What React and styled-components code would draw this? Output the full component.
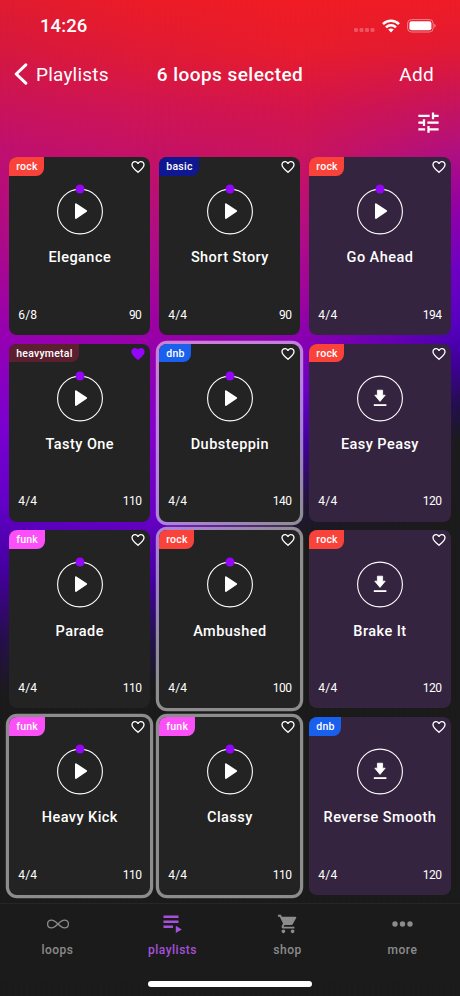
import React from 'react';
import styled, { createGlobalStyle } from 'styled-components';
import { MdFavorite, MdFavoriteBorder, MdShoppingCart, MdTune } from 'react-icons/md';

const GlobalStyle = createGlobalStyle`
  body {
    margin: 0;
    background: #1b1b1b;
  }
  * {
    box-sizing: border-box;
  }
`;

const Screen = styled.div`
  display: grid;
  width: 460px;
  height: 996px;
  overflow: hidden;
  color: #fff;
  font-family: Roboto, 'Liberation Sans', sans-serif;
`;

const Backdrop = styled.div`
  grid-area: 1 / 1;
  display: grid;
  background: #1b1b1b;
`;

const Glow = styled.div`
  grid-area: 1 / 1;
  background: linear-gradient(180deg, ${props => props.$stops});
  mask-image: ${props => props.$mask || 'none'};
`;

const Content = styled.div`
  grid-area: 1 / 1;
  z-index: 1;
  display: flex;
  flex-direction: column;
`;

const StatusBar = styled.div`
  display: flex;
  align-items: center;
  justify-content: space-between;
  height: 52px;
  padding: 0 24px 0 40px;
`;

const Time = styled.div`
  margin-top: -1px;
  font-size: 18.5px;
  font-weight: 500;
  letter-spacing: 0.1px;
`;

const StatusIcons = styled.div`
  display: flex;
  align-items: center;
  gap: 7px;
`;

const Header = styled.div`
  display: grid;
  grid-template-columns: 1fr auto 1fr;
  align-items: center;
  height: 44px;
  padding: 0 26px 0 14px;
`;

const Back = styled.div`
  display: flex;
  align-items: center;
  gap: 8px;
  font-size: 19px;
  letter-spacing: 0.2px;
`;

const Heading = styled.div`
  font-size: 19px;
  font-weight: 500;
  margin-left: 12px;
  letter-spacing: 0.45px;
`;

const Add = styled.div`
  justify-self: end;
  font-size: 19px;
  letter-spacing: 0.3px;
`;

const Toolbar = styled.div`
  display: flex;
  align-items: center;
  justify-content: flex-end;
  height: 53px;
  padding-right: 18px;
`;

const Grid = styled.div`
  display: grid;
  grid-template-columns: repeat(3, 141.2px);
  grid-auto-rows: 178px;
  gap: 8.7px 8.9px;
  height: 754px;
  padding: 8px 9px 0 9.2px;
`;

const Card = styled.div`
  display: flex;
  flex-direction: column;
  align-items: center;
  border-radius: 8px;
  background: ${props => (props.$shop ? '#35243f' : '#232323')};
  box-shadow: ${props => (props.$selected ? '0 0 0 3.2px rgba(255, 255, 255, 0.5)' : 'none')};
`;

const CardTop = styled.div`
  display: flex;
  justify-content: space-between;
  align-self: stretch;
  height: 31px;
  padding-right: 4px;
`;

const Tag = styled.div`
  height: 18.5px;
  padding: 0 6.5px 0 7px;
  border-radius: 8px 0 8px 0;
  background: ${props => props.$color};
  font-size: 10.5px;
  font-weight: 500;
  line-height: 19px;
  letter-spacing: 0.25px;
`;

const Favourite = styled.div`
  display: flex;
  margin-top: 2px;
  height: 16px;
  color: ${props => (props.$on ? '#9406f6' : '#fff')};
`;

const Name = styled.div`
  margin-top: 11.3px;
  font-size: 14.5px;
  font-weight: 500;
  line-height: 18px;
  letter-spacing: 0.45px;
  white-space: nowrap;
`;

const CardBottom = styled.div`
  display: flex;
  justify-content: space-between;
  align-self: stretch;
  margin-top: auto;
  padding: 0 9px 12.3px;
  font-size: 12px;
  line-height: 16px;
`;

const Beat = styled.span`
  letter-spacing: 0.2px;
`;

const Bpm = styled.span`
  letter-spacing: -0.5px;
`;

const TabBar = styled.div`
  display: flex;
  height: 78px;
  border-top: 1px solid #262626;
  background: #1b1b1b;
`;

const Tab = styled.div`
  display: flex;
  flex: 1;
  flex-direction: column;
  align-items: center;
  padding-top: 9px;
  color: ${props => (props.$active ? '#a651dc' : '#8c8c8c')};
  font-size: 12px;
  font-weight: 500;
  line-height: 18px;
  letter-spacing: 0.5px;
`;

const TabIcon = styled.div`
  display: flex;
  align-items: center;
  height: 22px;
  margin-bottom: 6px;
`;

const HomeIndicator = styled.div`
  width: 164px;
  height: 5.5px;
  align-self: center;
  border-radius: 3px;
  background: #fff;
`;

// each glow takes over from the previous one, left to right
const glows = [
  {
    stops: '#e01c30 0, #d6183f 50px, #bf1070 150px, #ae0b88 240px, #9500b4 340px, #7a00d0 430px, #6400c8 500px, #4500a0 570px, #260f4a 640px, #1b1b1b 695px',
  },
  {
    stops: '#ec1c26 0, #de1a38 60px, #cf1554 110px, #c61263 150px, #ac0c8c 250px, #9800a8 340px, #8300cc 430px, #6600c4 520px, #4400a0 580px, #22144a 640px, #1b1b1b 690px',
    mask: 'linear-gradient(90deg, transparent 0, #000 153px)',
  },
  {
    stops: '#f01c24 0, #e81c2c 50px, #d3154c 110px, #ca145c 150px, #b00c88 240px, #9c049f 300px, #8400b5 345px, #6a00c4 390px, #4400a0 440px, #22143a 500px, #1b1b1b 540px',
    mask: 'linear-gradient(90deg, transparent 153px, #000 305px)',
  },
  {
    stops: '#ee1c26 0, #e01a34 50px, #c8145a 100px, #b01080 150px, #9000a8 210px, #6c00c4 270px, #5400c0 325px, #3d0095 365px, #220f4a 405px, #1b1b1b 440px',
    mask: 'linear-gradient(90deg, transparent 305px, #000 460px)',
  },
];

const colors = {
  rock: '#f9423a',
  basic: '#0f1891',
  heavymetal: '#5c1f30',
  dnb: '#1a60ee',
  funk: '#fb50f8',
};

const loops = [
  { name: 'Elegance', tag: 'rock', beat: '6/8', bpm: 90 },
  { name: 'Short Story', tag: 'basic', beat: '4/4', bpm: 90 },
  { name: 'Go Ahead', tag: 'rock', beat: '4/4', bpm: 194, shop: true },
  { name: 'Tasty One', tag: 'heavymetal', beat: '4/4', bpm: 110, favourite: true },
  { name: 'Dubsteppin', tag: 'dnb', beat: '4/4', bpm: 140, selected: true },
  { name: 'Easy Peasy', tag: 'rock', beat: '4/4', bpm: 120, shop: true, download: true },
  { name: 'Parade', tag: 'funk', beat: '4/4', bpm: 110 },
  { name: 'Ambushed', tag: 'rock', beat: '4/4', bpm: 100, selected: true },
  { name: 'Brake It', tag: 'rock', beat: '4/4', bpm: 120, shop: true, download: true },
  { name: 'Heavy Kick', tag: 'funk', beat: '4/4', bpm: 110, selected: true },
  { name: 'Classy', tag: 'funk', beat: '4/4', bpm: 110, selected: true },
  { name: 'Reverse Smooth', tag: 'dnb', beat: '4/4', bpm: 120, shop: true, download: true },
];

const RoundButton = styled.div`
  display: flex;
  height: 50px;
  svg {
    overflow: visible;
  }
`;

const PlayIcon = () => (
  <svg width="48" height="50" viewBox="0 0 48 50">
    <circle cx="24" cy="23.5" r="22.4" fill="none" stroke="#fff" strokeWidth="1.1" />
    <circle cx="24" cy="1" r="4.5" fill="#9406f6" />
    <path d="M19.9 16.2 L30.2 23.1 L19.9 30 Z" fill="#fff" stroke="#fff" strokeWidth="1.8" strokeLinejoin="round" />
  </svg>
);

const DownloadIcon = () => (
  <svg width="48" height="50" viewBox="0 0 48 50">
    <circle cx="24" cy="23.5" r="22.4" fill="none" stroke="#fff" strokeWidth="1.1" />
    <path d="M21.4 15.2 h5.2 v5 h2.6 L24 26.4 L18.8 20.2 h2.6 Z" fill="#fff" stroke="#fff" strokeWidth="0.8" strokeLinejoin="round" />
    <path d="M17.8 30.1 h12.6" stroke="#fff" strokeWidth="1.8" />
  </svg>
);

const LoopCard = ({ loop }) => (
  <Card $shop={loop.shop} $selected={loop.selected}>
    <CardTop>
      <Tag $color={colors[loop.tag]}>{loop.tag}</Tag>
      <Favourite $on={loop.favourite}>
        {loop.favourite ? <MdFavorite size={16} /> : <MdFavoriteBorder size={16} />}
      </Favourite>
    </CardTop>
    <RoundButton>{loop.download ? <DownloadIcon /> : <PlayIcon />}</RoundButton>
    <Name>{loop.name}</Name>
    <CardBottom>
      <Beat>{loop.beat}</Beat>
      <Bpm>{loop.bpm}</Bpm>
    </CardBottom>
  </Card>
);

const Signal = () => (
  <svg width="21" height="14" viewBox="0 0 21 14" fill="#fff" fillOpacity="0.25">
    <rect x="0" y="9" width="4" height="4" rx="1.2" />
    <rect x="5.5" y="9" width="4" height="4" rx="1.2" />
    <rect x="11" y="9" width="4" height="4" rx="1.2" />
    <rect x="16.5" y="9" width="4" height="4" rx="1.2" />
  </svg>
);

const Wifi = () => (
  <svg width="18" height="14" viewBox="0 0 18 14" fill="none" stroke="#fff" strokeWidth="2.5">
    <path d="M1 5.1 C5.4 0.7 12.6 0.7 17 5.1" />
    <path d="M4 8.3 C6.8 5.6 11.2 5.6 14 8.3" />
    <path d="M9 13.4 L6.2 10.6 C7.8 9.2 10.2 9.2 11.8 10.6 Z" fill="#fff" stroke="none" />
  </svg>
);

const Battery = () => (
  <svg width="29" height="14" viewBox="0 0 29 14">
    <rect x="0.6" y="0.6" width="25.6" height="12.4" rx="3.8" fill="none" stroke="#fff" strokeOpacity="0.45" />
    <rect x="2.4" y="2.3" width="22" height="9" rx="2.1" fill="#fff" />
    <path d="M27.4 4.8 C29 5.6 29 8 27.4 8.8 Z" fill="#fff" fillOpacity="0.5" />
  </svg>
);

const Chevron = () => (
  <svg width="14" height="22" viewBox="0 0 14 22">
    <path d="M11.8 1.8 L2.2 11 L11.8 20.2" fill="none" stroke="#fff" strokeWidth="3" strokeLinecap="round" strokeLinejoin="round" />
  </svg>
);

const LoopsIcon = () => (
  <svg width="24" height="12" viewBox="0 0 24 12" fill="none" stroke="currentColor" strokeWidth="1.3">
    <path d="M12 6 C9.4 3.4 8 2.1 5.6 2.1 C3 2.1 1.6 3.8 1.6 6 C1.6 8.2 3 9.9 5.6 9.9 C8 9.9 9.4 8.6 12 6 C14.6 3.4 16 2.1 18.4 2.1 C21 2.1 22.4 3.8 22.4 6 C22.4 8.2 21 9.9 18.4 9.9 C16 9.9 14.6 8.6 12 6 Z" />
  </svg>
);

const PlaylistsIcon = () => (
  <svg width="19" height="18" viewBox="0 0 19 18" fill="currentColor">
    <path d="M0.5 0.6 h15 v2.4 h-15 Z M0.5 5.6 h15 v2.4 h-15 Z M0.5 10.6 h9.5 v2.4 h-9.5 Z" />
    <path d="M12.8 10.8 L18.8 14.4 L12.8 18 Z" />
  </svg>
);

const MoreIcon = () => (
  <svg width="22" height="8" viewBox="0 0 22 8" fill="currentColor">
    <circle cx="3" cy="4" r="2.7" />
    <circle cx="10.5" cy="4" r="2.7" />
    <circle cx="18" cy="4" r="2.7" />
  </svg>
);

const tabs = [
  { label: 'loops', icon: <LoopsIcon /> },
  { label: 'playlists', icon: <PlaylistsIcon />, active: true },
  { label: 'shop', icon: <MdShoppingCart size={22} /> },
  { label: 'more', icon: <MoreIcon /> },
];

const App = () => (
  <Screen>
    <GlobalStyle />
    <Backdrop>
      {glows.map((glow, i) => (
        <Glow key={i} $stops={glow.stops} $mask={glow.mask} />
      ))}
    </Backdrop>
    <Content>
      <StatusBar>
        <Time>14:26</Time>
        <StatusIcons>
          <Signal />
          <Wifi />
          <Battery />
        </StatusIcons>
      </StatusBar>
      <Header>
        <Back>
          <Chevron />
          Playlists
        </Back>
        <Heading>6 loops selected</Heading>
        <Add>Add</Add>
      </Header>
      <Toolbar>
        <MdTune size={27} />
      </Toolbar>
      <Grid>
        {loops.map(loop => (
          <LoopCard key={loop.name} loop={loop} />
        ))}
      </Grid>
      <TabBar>
        {tabs.map(tab => (
          <Tab key={tab.label} $active={tab.active}>
            <TabIcon>{tab.icon}</TabIcon>
            {tab.label}
          </Tab>
        ))}
      </TabBar>
      <HomeIndicator />
    </Content>
  </Screen>
);

export default App;
